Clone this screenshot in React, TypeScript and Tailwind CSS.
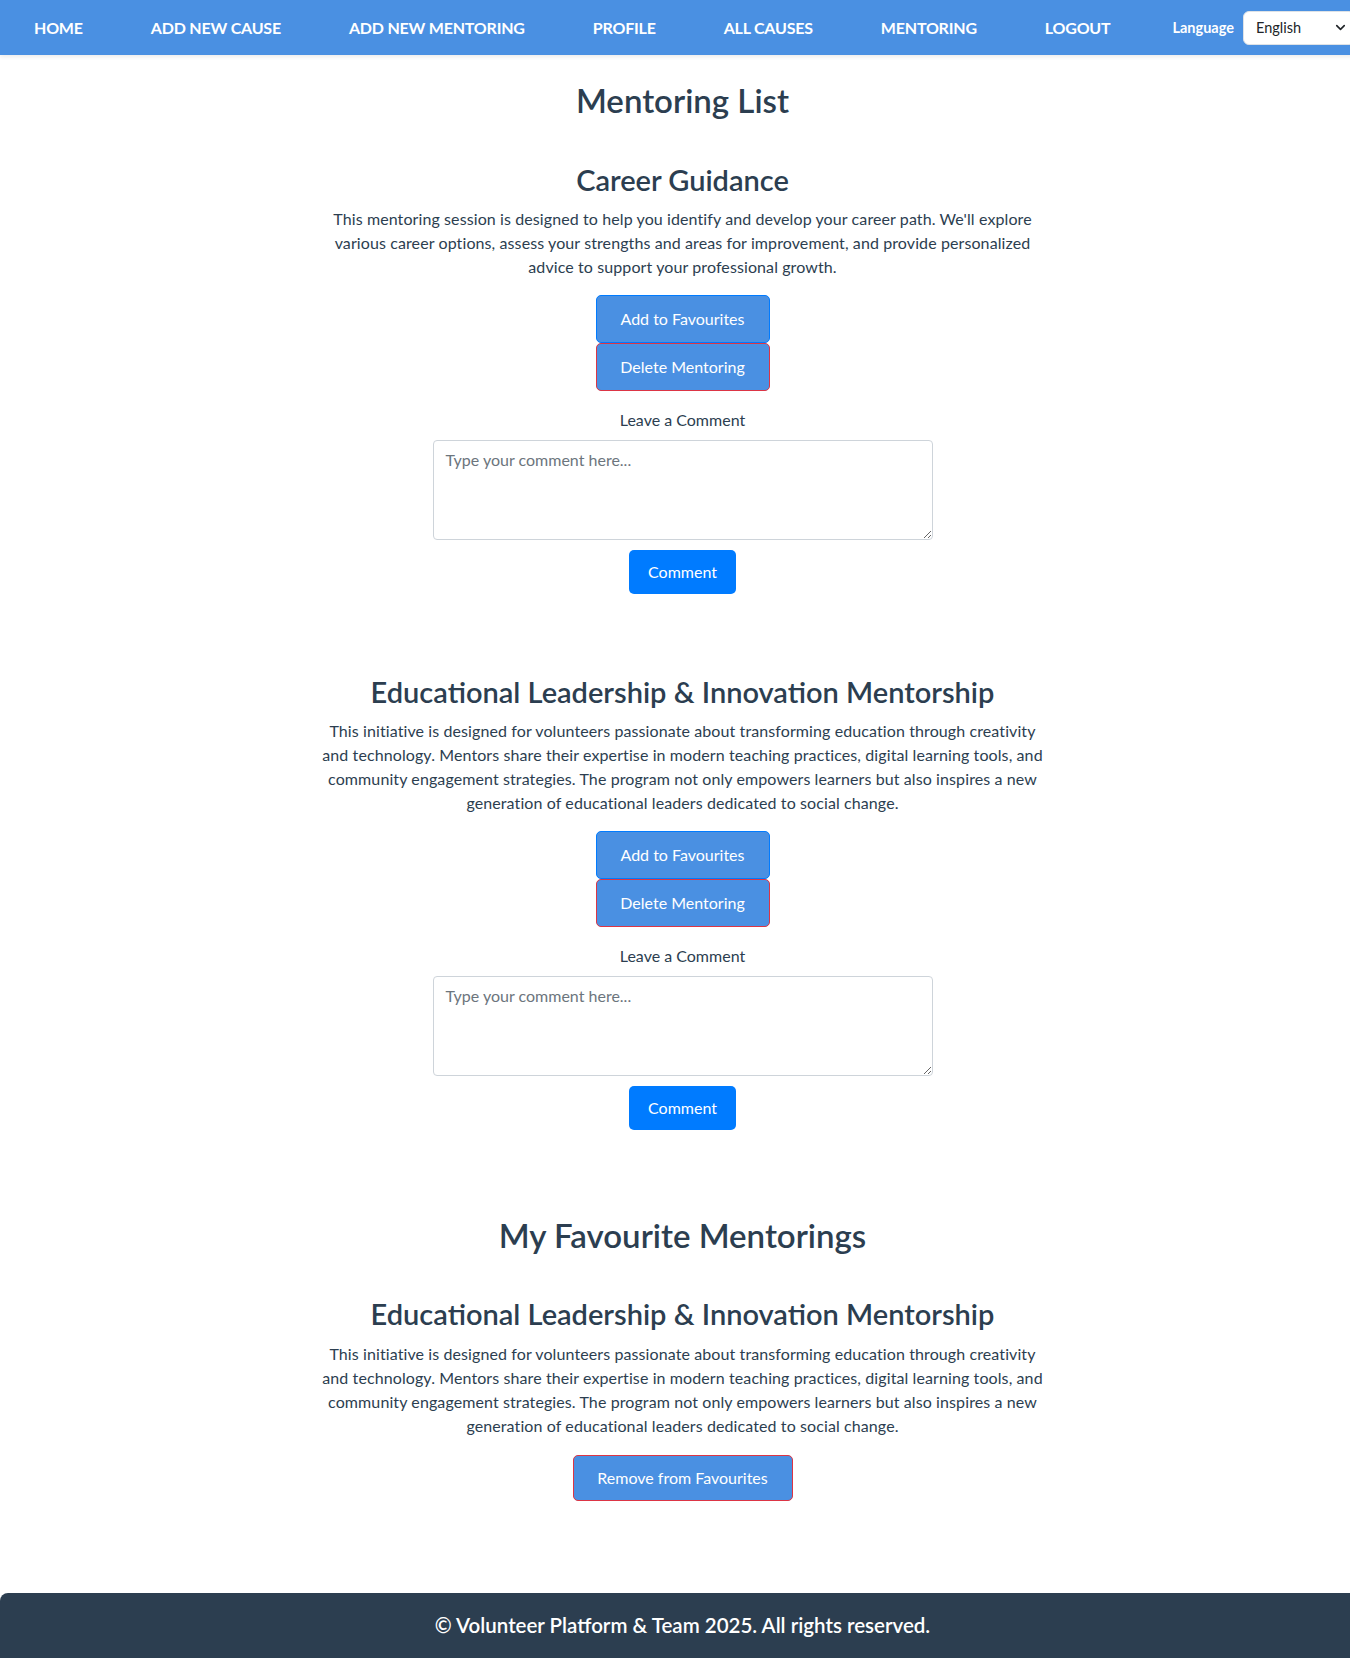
import React from 'react';
import { ChevronDown } from 'lucide-react';

// Mentoring list page: navbar, mentoring cards with comments, favourites and footer

type Mentoring = {
  id: number;
  title: string;
  description: string;
};

const navLinks = ['Home', 'Add New Cause', 'Add New Mentoring', 'Profile', 'All Causes', 'Mentoring', 'Logout'];

const mentorings: Mentoring[] = [
  {
    id: 1,
    title: 'Career Guidance',
    description:
      "This mentoring session is designed to help you identify and develop your career path. We'll explore various career options, assess your strengths and areas for improvement, and provide personalized advice to support your professional growth.",
  },
  {
    id: 2,
    title: 'Educational Leadership & Innovation Mentorship',
    description:
      'This initiative is designed for volunteers passionate about transforming education through creativity and technology. Mentors share their expertise in modern teaching practices, digital learning tools, and community engagement strategies. The program not only empowers learners but also inspires a new generation of educational leaders dedicated to social change.',
  },
];

const favourites = [mentorings[1]];

const Navbar = () => (
  <nav className="h-[55px] bg-[#4a90e2] flex items-center pl-[34px] shadow-[0_2px_4px_rgba(0,0,0,0.08)] overflow-hidden">
    <ul className="flex items-center gap-[68px] shrink-0">
      {navLinks.map((link) => (
        <li key={link} className="shrink-0 whitespace-nowrap">
          <a href="#" className="text-white font-bold text-[16px] uppercase tracking-[-0.2px]">
            {link}
          </a>
        </li>
      ))}
    </ul>
    <span className="ml-[62px] shrink-0 whitespace-nowrap text-white font-bold text-[14.5px]">Language</span>
    <div className="ml-[9px] h-[34px] w-[112px] shrink-0 bg-white rounded-[6px] border border-[#dee2e6] flex items-center justify-between pl-[12px] pr-[6px] text-[14.5px] text-[#212529]">
      <span>English</span>
      <ChevronDown size={15} strokeWidth={2.6} />
    </div>
  </nav>
);

const MentoringCard = ({ item, first }: { item: Mentoring; first?: boolean }) => (
  <div className={first ? 'mt-[44px] flex flex-col items-center' : 'mt-[81px] flex flex-col items-center'}>
    <h3 className="text-[29px] leading-[34px] font-semibold text-[#2c3e50]">{item.title}</h3>
    <p className="mt-[10px] max-w-[722px] text-center text-[16px] leading-[24px] tracking-[0.1px] text-[#2c3e50]">
      {item.description}
    </p>
    <div className="mt-[16px] flex flex-col items-center">
      <button className="w-[174px] h-[48px] bg-[#4a90e2] text-white text-[16px] rounded-[5px] border border-[#007bff]">
        Add to Favourites
      </button>
      <button className="w-[174px] h-[48px] bg-[#4a90e2] text-white text-[16px] rounded-[5px] border border-[#dc3545]">
        Delete Mentoring
      </button>
    </div>
    <label className="mt-[17px] text-[16px] leading-[24px] text-[#2c3e50]">Leave a Comment</label>
    <textarea
      placeholder="Type your comment here..."
      className="mt-[8px] w-[500px] h-[100px] border border-[#ced4da] rounded-[4px] px-[12px] py-[7px] text-[16px] leading-[24px] placeholder:text-[#6c757d] outline-none"
    />
    <button className="mt-[10px] h-[44px] px-[19px] bg-[#007bff] text-white text-[16px] rounded-[5px]">Comment</button>
  </div>
);

const FavouriteCard = ({ item }: { item: Mentoring }) => (
  <div className="mt-[43px] flex flex-col items-center">
    <h3 className="text-[29px] leading-[34px] font-semibold text-[#2c3e50]">{item.title}</h3>
    <p className="mt-[11px] max-w-[722px] text-center text-[16px] leading-[24px] tracking-[0.1px] text-[#2c3e50]">
      {item.description}
    </p>
    <button className="mt-[17px] w-[220px] h-[46px] bg-[#4a90e2] text-white text-[16px] rounded-[5px] border border-[#dc3545]">
      Remove from Favourites
    </button>
  </div>
);

export default function App() {
  return (
    <div className="w-[1365px] bg-white font-['Lato',sans-serif]">
      <Navbar />
      <main className="pt-[26px] flex flex-col items-center">
        <h2 className="text-[33px] leading-[38px] font-semibold text-[#2c3e50]">Mentoring List</h2>
        {mentorings.map((m, i) => (
          <MentoringCard key={m.id} item={m} first={i === 0} />
        ))}
        <h2 className="mt-[86px] text-[33px] leading-[38px] font-semibold text-[#2c3e50]">My Favourite Mentorings</h2>
        {favourites.map((m) => (
          <FavouriteCard key={m.id} item={m} />
        ))}
      </main>
      <footer className="mt-[92px] h-[65px] bg-[#2c3e50] rounded-t-[8px] flex items-center justify-center">
        <p className="text-white text-[20.5px] font-semibold">© Volunteer Platform &amp; Team 2025. All rights reserved.</p>
      </footer>
    </div>
  );
}
